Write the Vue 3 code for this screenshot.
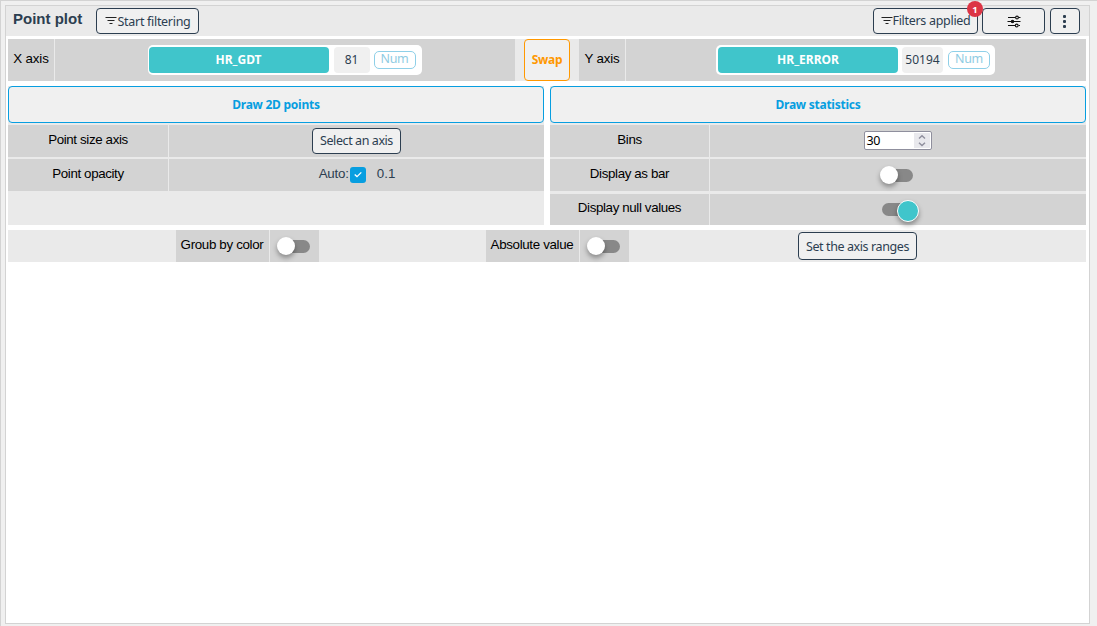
<script setup>
import { ref } from 'vue'

const axes = [
  { label: 'X axis', name: 'HR_GDT', count: '81' },
  { label: 'Y axis', name: 'HR_ERROR', count: '50194' }
]
const bins = ref(30)
</script>

<template>
  <div class="page">
    <section class="panel">
      <header class="header">
        <h1 class="title">Point plot</h1>
        <button class="btn start">
          <svg class="filter-icon" width="12" height="10" viewBox="0 0 12 10"><path d="M.5 1.5h11M2.5 4.5h7M4.5 7.5h3" /></svg>
          <span class="t-start">Start filtering</span>
        </button>
        <span class="grow"></span>
        <button class="btn applied">
          <svg class="filter-icon" width="12" height="10" viewBox="0 0 12 10"><path d="M.5 1.5h11M2.5 4.5h7M4.5 7.5h3" /></svg>
          <span class="t-applied">Filters applied</span>
          <span class="badge">1</span>
        </button>
        <button class="btn tune">
          <svg width="14" height="13" viewBox="0 0 14 13" fill="none" stroke="#111" stroke-width="1.1">
            <path d="M1 2.5h7.5M11.5 2.5h2M.5 6.5h3.5M7 6.5h6.5M1 10.5h7M11.5 10.5h1.5" />
            <circle cx="10" cy="2.5" r="1.4" /><circle cx="5.5" cy="6.5" r="1.2" fill="#111" /><circle cx="9.7" cy="10.5" r="1.4" />
          </svg>
        </button>
        <button class="btn more"><i></i><i></i><i></i></button>
      </header>

      <div class="axes">
        <template v-for="(axis, i) in axes" :key="axis.label">
          <div v-if="i" class="swap-cell"><button class="swap">Swap</button></div>
          <div class="axis">
            <div class="axis-label">{{ axis.label }}</div>
            <div class="axis-value">
              <div class="chip" :class="{ first: !i }">
                <span class="chip-name">{{ axis.name }}</span>
                <span class="chip-count" :class="{ wide: i }">{{ axis.count }}</span>
                <span class="chip-type">Num</span>
              </div>
            </div>
          </div>
        </template>
      </div>

      <div class="columns">
        <div class="column">
          <button class="draw"><span class="t-draw">Draw 2D points</span></button>
          <div class="row">
            <div class="name">Point size axis</div>
            <div class="value"><button class="btn select"><span class="t-select">Select an axis</span></button></div>
          </div>
          <div class="row">
            <div class="name">Point opacity</div>
            <div class="value opacity">
              <span class="auto">Auto:</span>
              <span class="check"><svg width="16" height="16" viewBox="0 0 16 16"><path d="M4.7 7.5 7 9.6l4.3-4.2" fill="none" stroke="#fff" stroke-width="1.3" /></svg></span>
              <span class="amount">0.1</span>
            </div>
          </div>
        </div>
        <div class="column right">
          <button class="draw"><span class="t-draw">Draw statistics</span></button>
          <div class="row">
            <div class="name">Bins</div>
            <div class="value">
              <div class="number">
                <span class="digits">{{ bins }}</span>
                <span class="spin"><svg width="16" height="15" viewBox="0 0 16 15" fill="none" stroke="#8f8f9d" stroke-width="1.4"><path d="M5 5.5 8 2.7l3 2.8M5 9.8l3 2.8 3-2.8" /></svg></span>
              </div>
            </div>
          </div>
          <div class="row">
            <div class="name">Display as bar</div>
            <div class="value"><span class="toggle mid"></span></div>
          </div>
          <div class="row last">
            <div class="name">Display null values</div>
            <div class="value"><span class="toggle on"></span></div>
          </div>
        </div>
      </div>

      <footer class="options">
        <div class="option"><span class="option-name">Groub by color</span><span class="option-value"><span class="toggle"></span></span></div>
        <div class="option"><span class="option-name">Absolute value</span><span class="option-value"><span class="toggle"></span></span></div>
        <button class="btn ranges"><span class="t-ranges">Set the axis ranges</span></button>
      </footer>
    </section>
  </div>
</template>

<style>
body { background: #f0f0f0; }
</style>

<style scoped>
* { box-sizing: border-box; }
.page {
  height: 626px;
  padding: 4px 7px 2px 4px;
  border: solid #d3d3d3;
  border-width: 1px 0 0 1px;
  background: #f0f0f0;
  font: 13.33px/16px "Liberation Sans", Arial, sans-serif;
  color: #000;
}
.panel { width: 1085px; height: 619px; border: 1px solid #d3d3d3; background: #fff; }
button {
  margin: 0;
  padding: 0;
  background: #f0f0f0;
  font: 12.5px/16px "Noto Sans", sans-serif;
  color: #2c3e50;
  white-space: nowrap;
}
.header { display: flex; height: 30px; padding: 2px 9px 0 7px; background: #eaeaea; }
.title { width: 83px; margin: 2px 0 0; font-size: 15px; line-height: 18px; font-weight: bold; color: #2c3e50; }
.btn { display: flex; align-items: center; justify-content: center; height: 26px; border: 1px solid #2c3e50; border-radius: 4px; }
.filter-icon { flex: none; fill: none; stroke: #222; stroke-width: 1.1; }
.start { width: 103px; gap: 1px; }
.t-start { padding-top: 1px; letter-spacing: -.3px; }
.t-applied { letter-spacing: -.3px; }
.t-select { letter-spacing: -.42px; }
.t-ranges { padding-top: 1px; letter-spacing: -.4px; }
.t-draw { letter-spacing: -.25px; }
.grow { flex: 1; }
.applied { position: relative; width: 105px; margin-right: 4px; }
.badge {
  position: absolute;
  top: -8px;
  right: -6px;
  width: 16px;
  height: 16px;
  border-radius: 50%;
  background: #dc3545;
  color: #fff;
  font: bold 9.5px/17px "Noto Sans", sans-serif;
  text-align: center;
}
.tune { width: 63px; margin-right: 5px; }
.more { width: 30px; padding-right: 1px; flex-direction: column; gap: 2px; }
.more i { width: 3px; height: 3px; background: #2c3e50; border-radius: 1px; }

.axes { display: flex; height: 42px; margin: 3px 3px 5px 2px; background: #eaeaea; }
.axis { display: flex; width: 507px; background: #d3d3d3; }
.axis-label { width: 47px; padding-top: 12px; border-right: 1px solid #eaeaea; letter-spacing: -.15px; text-align: center; }
.axis-value { flex: 1; display: flex; justify-content: center; align-items: center; }
.chip {
  display: flex;
  align-items: center;
  height: 30px;
  padding: 0 5px 0 2px;
  margin-right: 1px;
  border-radius: 5px;
  background: #fff;
  font: 12.5px/16px "Noto Sans", sans-serif;
  color: #2c3e50;
}
.chip.first { padding: 0 6px 0 1px; }
.chip-name { width: 180px; height: 26px; border-radius: 4px; background: #40c5cb; color: #fff; font-size: 12px; font-weight: bold; line-height: 26px; text-align: center; }
.chip-count { width: 36px; height: 26px; margin: 0 4px 0 5px; border-radius: 4px; background: #f0f0f0; font-size: 12px; line-height: 26px; text-align: center; }
.chip-count.wide { width: 41px; margin-left: 4px; margin-right: 5px; }
.chip-type { width: 42px; height: 18px; border: 1px solid #8fd0e8; border-radius: 5px; color: #8fcce3; font-size: 12.5px; line-height: 14px; letter-spacing: -.3px; text-align: center; }
.swap-cell { width: 64px; padding-left: 9px; }
.swap { width: 46px; height: 42px; border: 1px solid #ff9800; border-radius: 4px; color: #ff9800; font-size: 12px; font-weight: bold; letter-spacing: -.3px; }

.columns { display: flex; justify-content: space-between; height: 139px; margin: 0 3px 0 2px; }
.column { width: 536px; background: #eaeaea; }
.draw { display: block; width: 536px; height: 37px; margin-bottom: 2px; border: 1px solid #079ee0; border-radius: 4px; color: #079ee0; font-size: 12px; font-weight: bold; }
.row { display: flex; height: 32px; margin-bottom: 2px; background: #d3d3d3; }
.row.last { height: 31px; margin-top: 3px; }
.name { width: 161px; padding-top: 7px; border-right: 1px solid #eaeaea; letter-spacing: -.37px; text-align: center; }
.right .name { width: 160px; }
.last .name { padding-top: 6px; }
.value { flex: 1; display: flex; align-items: center; justify-content: center; }
.select { width: 89px; }
.opacity { color: #2c3e50; align-items: flex-start; padding: 7px 0 0 1px; }
.auto { letter-spacing: -.2px; }
.check { width: 16px; height: 16px; margin: 1px 11px 0 1px; border-radius: 3px; background: #079ee0; }
.check svg { display: block; }
.number { display: flex; width: 68px; height: 19px; margin: 0 1px 1px 0; padding: 1px; border: 1px solid #8f8f9d; border-radius: 2px; background: #fff; }
.digits { flex: 1; padding-left: 1px; font: 12.5px/16px "Noto Sans", sans-serif; letter-spacing: -.4px; }
.spin { width: 16px; height: 15px; background: #e9e9ed; }
.spin svg { display: block; }

.toggle { position: relative; display: block; width: 32px; height: 13px; border-radius: 7px; background: #888; }
.toggle.mid { margin-right: 3px; }
.toggle::after {
  content: "";
  position: absolute;
  top: -3px;
  left: -1px;
  width: 18px;
  height: 18px;
  border-radius: 50%;
  background: #fff;
  box-shadow: 0 3px 5px rgba(0, 0, 0, .35);
}
.toggle.on::after { left: 15px; top: -3px; width: 20px; height: 20px; border: 1px solid #fff; background: #40c5cb; }

.options { display: flex; height: 32px; margin: 5px 3px 0 2px; padding-left: 168px; background: #eaeaea; }
.option { display: flex; width: 143px; margin-right: 167px; background: #d3d3d3; }
.option-name { width: 94px; padding: 7px 1px 0 0; border-right: 1px solid #eaeaea; letter-spacing: -.33px; text-align: center; white-space: nowrap; }
.option-value { padding: 10px 0 0 8px; }
.ranges { width: 119px; height: 28px; margin: 2px 0 0 2px; }
</style>
